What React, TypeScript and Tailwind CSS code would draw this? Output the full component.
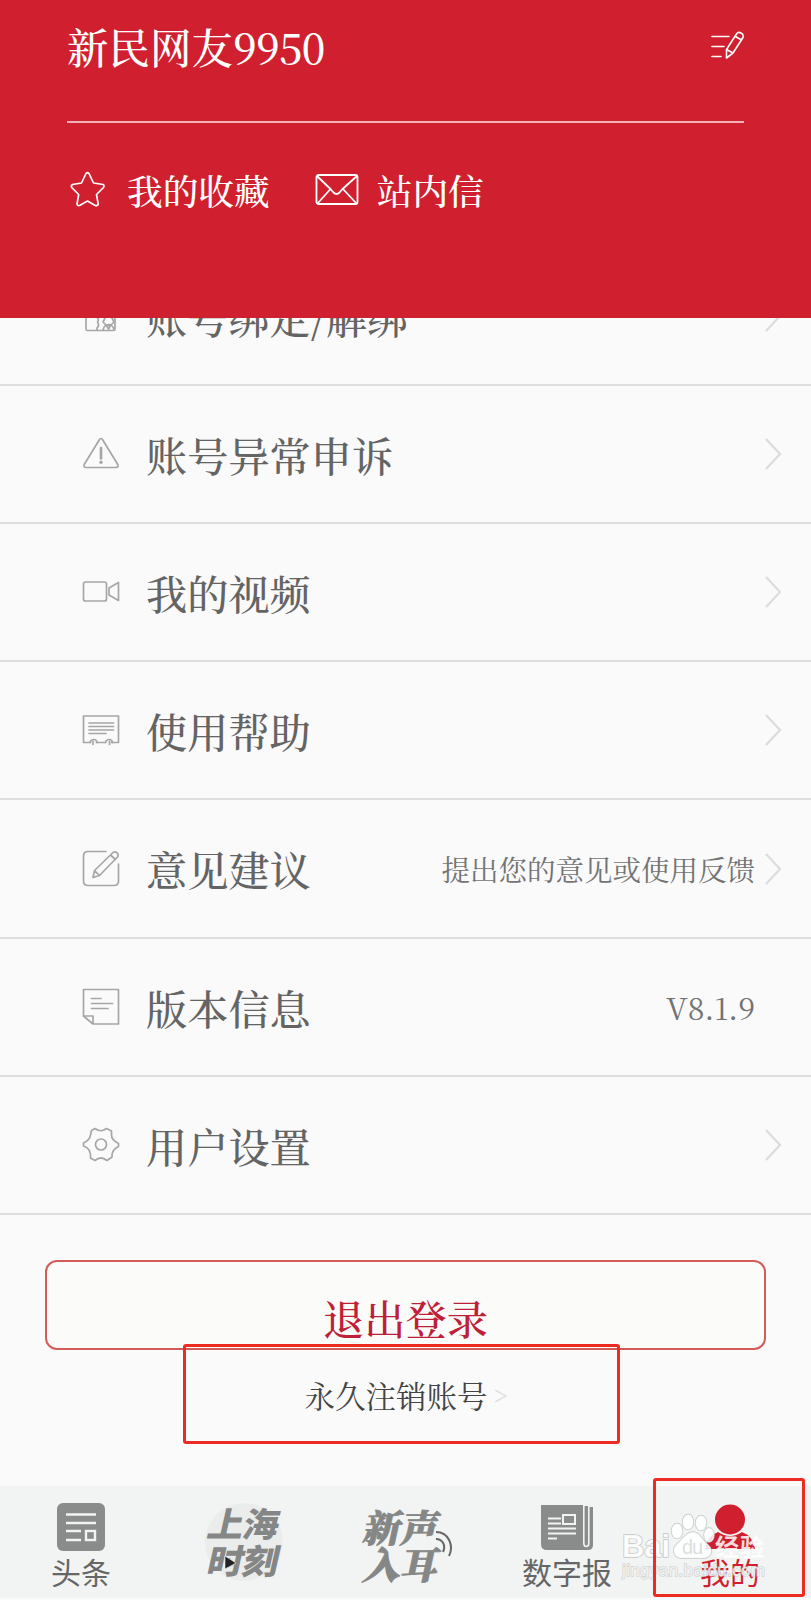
import type { ReactNode } from 'react';

const SERIF = "font-['Noto_Serif_CJK_SC','Noto_Serif_SC','Noto_Sans_CJK_SC',serif]";
const SANS = "font-['Noto_Sans_CJK_SC',sans-serif]";

function Icon({ children }: { children: ReactNode }) {
  return (
    <svg width="38" height="38" viewBox="0 0 38 38" fill="none" stroke="#a6a6a6" strokeWidth="1.7"
      strokeLinecap="round" strokeLinejoin="round" className="shrink-0">
      {children}
    </svg>
  );
}

const BindIcon = () => (
  <Icon>
    <path d="M4 8h29v24q0 1.500-1.500 1.500h-26Q4 33.500 4 32z" />
    <path d="M14 8v12c2.500 1 3 3 1.500 5 1.500 2 1.500 4-.5 6v2" />
    <path d="M21 33c1-4 2.500-5.500 5.500-5.500s4.500 1.500 5.500 5M23 21l-2 4 3.500 3.500h4L32 25l-2-4M24.500 28.500 26.500 32l2-3.500" />
  </Icon>
);

const WarnIcon = () => (
  <Icon>
    <path d="M17.200 5q1.800-3 3.600 0l15 24.500q1 3-1.800 3H4q-2.800 0-1.800-3z" />
    <path d="M19 13v10.500" strokeWidth="2.600" />
    <circle cx="19" cy="27.300" r="1.700" fill="#a6a6a6" stroke="none" />
  </Icon>
);

const VideoIcon = () => (
  <Icon>
    <rect x="1.500" y="9" width="23" height="19" rx="2" />
    <path d="M27 15 36.500 9.500v18L27 22z" />
  </Icon>
);

const HelpIcon = () => (
  <Icon>
    <path d="M8.500 31.500h-7V5h35v26.500h-7M14.500 31.500h9" />
    <path d="M8 31.500c1-4 6.500-4 7 0M23.500 31.500c1-4 6.500-4 7 0M11 30.500v3M27.500 30.500v3" />
    <path d="M7 12h24.500M7 15.500h24.500M7 19h24.500M7 22.500h17" />
  </Icon>
);

const FeedbackIcon = () => (
  <Icon>
    <path d="M24 1.500H6q-4.500 0-4.500 4.500v25q0 4.500 4.500 4.500h26q4.500 0 4.500-4.500V14" />
    <path d="m11 27.500 1.500-7L31 2.500q2-1.500 4 .3t.5 4.200l-18 18.500zM12.500 20.500l5 5M28.500 5l5 4.500" />
  </Icon>
);

const VersionIcon = () => (
  <Icon>
    <path d="M1.500 28V1.500h35v34.500H11zM1.500 28H11v8" />
    <path d="M9.500 10.500h9.500M9.500 15.500h21M9.500 20.500h16.500" />
  </Icon>
);

const GearIcon = () => (
  <Icon>
    <path d="M9.500 4.500 13 2.500q6 4.500 11.500 0l5 2.500v4q0 5 7 8.500v3q-6 3-6.500 8.500V31l-5 3.500q-6-5-12 0L8.500 32v-3.500Q8 22.500 1.500 20v-3q6.500-3 7-8z" />
    <circle cx="19" cy="18.500" r="5.500" />
  </Icon>
);

const Chevron = () => (
  <svg width="18" height="32" viewBox="0 0 18 32" fill="none" stroke="#dcdcdc" strokeWidth="2.2" className="mr-px shrink-0">
    <path d="m2 1 14 15L2 31" />
  </svg>
);

const ITEMS = [
  { label: '账号绑定/解绑', icon: <BindIcon />, arrow: true },
  { label: '账号异常申诉', icon: <WarnIcon />, arrow: true },
  { label: '我的视频', icon: <VideoIcon />, arrow: true },
  { label: '使用帮助', icon: <HelpIcon />, arrow: true },
  { label: '意见建议', icon: <FeedbackIcon />, hint: '提出您的意见或使用反馈', arrow: true },
  { label: '版本信息', icon: <VersionIcon />, hint: 'V8.1.9', arrow: false },
  { label: '用户设置', icon: <GearIcon />, arrow: true },
];

function Header() {
  return (
    <header className="h-[318px] shrink-0 bg-[#d01f2e] px-[67px] font-medium text-white">
      <div className="box-content flex h-[121px] items-center justify-between border-b-2 border-[#f0b4b8]">
        <h1 className="mb-[27px] text-[41.500px] leading-none whitespace-nowrap">
          新民网友<span className="tracking-[-0.800px]">9950</span>
        </h1>
        <svg width="34" height="30" viewBox="0 0 34 30" fill="none" stroke="white" strokeWidth="1.600"
          strokeLinecap="round" strokeLinejoin="round" className="-mr-px mb-[30px]">
          <path d="M1 5.500h17M1 15.500h12M1 25.500h9" />
          <path d="m15.500 18.500 10-15.500q1.500-2.500 4.500-1t2 4.500L22 22l-6.500 5zM24.500 5.500l6 3.500M15.500 18.500l6.500 3.500" />
        </svg>
      </div>
      <div className="mt-[46px] flex h-[42px] items-center text-[35.700px] leading-none">
        <svg width="40" height="40" viewBox="0 0 40 40" fill="none" stroke="white" strokeWidth="1.700" strokeLinejoin="round">
          <path d="M19 3.500q1.500-1.500 3 0l4.500 9.500 9.500 1.500q1.700 1 .5 3l-7 7 1.700 9.500q-.5 2.300-3 1.500L20.500 31l-8 4.500q-2 .5-2.500-1.500l1.700-9.500-7-7q-1-2 .8-3l9-1.500z" />
        </svg>
        <span className="mb-px ml-[20px]">我的收藏</span>
        <svg width="44" height="34" viewBox="0 0 44 34" fill="none" stroke="white" strokeWidth="1.800" strokeLinejoin="round" className="ml-[45px]">
          <rect x="1.500" y="2" width="41" height="29" rx="2" />
          <path d="m2 3 13.500 13 3 3.500q3 3 6 0l3-3.500L42 3M2.500 30.500l13-14.500M41.500 30.500 28 16" />
        </svg>
        <span className="mb-px ml-[18px]">站内信</span>
      </div>
    </header>
  );
}

function TabBar() {
  return (
    <nav className={`${SANS} flex h-[112px] shrink-0 bg-[#f2f4f3] text-[#666]`}>
      <div className="flex w-[162px] flex-col items-center pt-[17px]">
        <svg width="48" height="48" viewBox="0 0 48 48" fill="none" stroke="#f2f4f3" strokeWidth="2.400">
          <rect width="48" height="48" rx="6" fill="#8a8b8b" stroke="none" />
          <path d="M9 11.500h30M9 20h30M9 28h15M9 37h15" />
          <rect x="29" y="28" width="9" height="9" />
        </svg>
        <span className="mt-[5px] text-[30px] leading-[30px]">头条</span>
      </div>

      <div className="flex w-[164px] justify-center">
        <div className="relative mt-[17px] flex h-[78px] w-[78px] flex-col items-center rounded-full bg-[#ebeded] text-[36px] font-extrabold tracking-[-1px] text-[#858686]">
          <span className="mt-px h-[37px] -skew-x-12 scale-y-95 leading-[36px] whitespace-nowrap">上海</span>
          <span className="h-[36px] -skew-x-12 scale-y-95 leading-[36px] whitespace-nowrap">时刻</span>
          <svg width="13" height="15" viewBox="0 0 13 15" className="absolute top-[52px] left-[19px]">
            <path d="M1 1v13l11-6z" fill="#222" stroke="#f2f4f3" strokeWidth=".6" />
          </svg>
        </div>
      </div>

      <div className={`${SERIF} flex w-[152px] justify-center`}>
        <div className="relative mt-[22px] flex w-[80px] flex-col items-center text-[37.500px] font-black text-[#858686] [-webkit-text-stroke:0.8px_#858686]">
          <span className="h-[37px] -skew-x-12 leading-[37px] whitespace-nowrap">新声</span>
          <span className="h-[37px] -skew-x-12 leading-[37px] whitespace-nowrap">入耳</span>
          <svg width="20" height="28" viewBox="0 0 20 28" fill="none" stroke="#666" strokeWidth="2" className="absolute top-[22px] left-[72px]">
            <path d="M2 2c13 0 18 14 13 24M2 9c7 0 10 7 7 13" />
          </svg>
        </div>
      </div>

      <div className="flex w-[178px] flex-col items-center pt-[18px]">
        <svg width="54" height="47" viewBox="0 0 54 47" fill="none" stroke="#f2f4f3" strokeWidth="1.600">
          <path d="M1 1h42v1h5v1h5v38q0 5-5 5H7q-6 0-6-6z" fill="#8a8b8b" stroke="none" />
          <path d="M43.800 1v38q0 3.500 2.500 3.500t2.500-3.500V2" />
          <rect x="23" y="11" width="12" height="9" strokeWidth="2" />
          <path d="M8 14.500h13M8 19.500h13M8 24.500h28M8 29.500h28M8 34.500h9" strokeWidth="2" />
        </svg>
        <span className="mt-[5px] text-[30px] leading-[30px]">数字报</span>
      </div>

      <div className="relative flex flex-1 flex-col items-center pr-[7px] pt-[18px] text-[#d01f2e]">
        <svg width="56" height="46" viewBox="0 0 56 46" fill="#d01f2e">
          <circle cx="28" cy="15.500" r="15" />
          <path d="M3 45q2-13 13-17 12 8 24 0 11 4 13 17z" />
        </svg>
        <span className="mt-[6px] text-[30px] leading-[30px]">我的</span>
        <Watermark />
        <div className="absolute -top-[8px] -left-[3px] h-[119px] w-[152px] rounded-[3px] border-3 border-[#ee2b22]" />
      </div>
    </nav>
  );
}

function Watermark() {
  return (
    <svg width="148" height="76" viewBox="0 0 148 76" className="absolute top-[24px] -left-[35px]"
      fill="#fff" fillOpacity=".85" stroke="#c4c7c7" strokeWidth="1.400" paintOrder="stroke"
      fontFamily="Liberation Sans, Noto Sans CJK SC, sans-serif">
      <ellipse cx="56" cy="21" rx="5.500" ry="7.500" />
      <ellipse cx="67" cy="12" rx="5.500" ry="7.500" />
      <ellipse cx="80" cy="13" rx="5.500" ry="7.500" />
      <ellipse cx="88" cy="25" rx="5" ry="7" />
      <path d="M72 22c7 0 9 8 15 13 7 7 2 13-5 13H61c-8 0-11-8-5-14 6-5 9-12 16-12z" />
      <text x="1" y="47" fontSize="31" fontWeight="bold" textLength="48">Bai</text>
      <text x="61" y="44" fontSize="20" textLength="21" fill="#d5d8d8" stroke="none">du</text>
      <text x="94" y="46" fontSize="24" fontWeight="bold" textLength="49" stroke="none">经验</text>
      <text x="1" y="66" fontSize="17" textLength="143" strokeOpacity=".7" fillOpacity=".7">jingyan.baidu.com</text>
    </svg>
  );
}

export default function App() {
  return (
    <div className={`${SERIF} flex h-[1600px] w-[811px] flex-col overflow-hidden bg-[#fafafa]`} lang="zh-CN">
      <Header />

      {/* the first row is scrolled half under the header */}
      <ul className="flex h-[897px] shrink-0 flex-col justify-end overflow-hidden">
        {ITEMS.map(item => (
          <li key={item.label} className="flex h-[138.200px] shrink-0 items-center border-b-2 border-[#dedede] pr-[28px] pl-[82px] text-[#646464]">
            {item.icon}
            <span className="ml-[26px] flex-1 pt-px text-[41.200px] leading-none font-medium whitespace-nowrap">{item.label}</span>
            {item.hint && (
              <span className={`pt-px whitespace-nowrap text-[#737373] ${item.arrow ? 'mr-[9px] text-[28.500px]' : 'mr-[28px] text-[30px]'}`}>
                {item.hint}
              </span>
            )}
            {item.arrow && <Chevron />}
          </li>
        ))}
      </ul>

      <section className="flex h-[271px] shrink-0 flex-col items-center pt-[45px]">
        <button className="h-[90px] w-[721px] shrink-0 rounded-[12px] border-2 border-[#d15c58] bg-[#fbfbf9] pt-[26px] text-[41.200px] leading-none font-medium text-[#bd2037]">
          退出登录
        </button>
        <div className="-mt-[6px] mr-[9px] flex h-[100px] w-[437px] shrink-0 items-center rounded-[3px] border-3 border-[#ee2b22] pt-[3px] pl-[119px]">
          <span className="text-[30.500px] leading-none whitespace-nowrap text-[#444]">永久注销账号</span>
          <svg width="14" height="16" viewBox="0 0 14 16" fill="none" stroke="#e2e2e2" strokeWidth="1.500" className="ml-[6px]">
            <path d="m1 2 11 6-11 6" />
          </svg>
        </div>
      </section>

      <TabBar />
    </div>
  );
}
